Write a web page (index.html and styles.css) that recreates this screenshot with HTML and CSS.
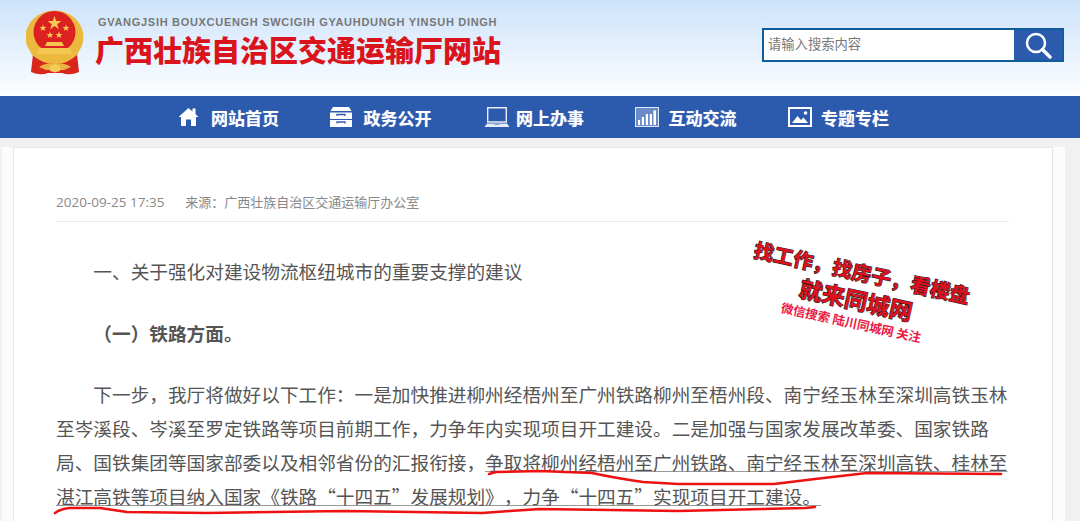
FILE: index.html
```html
<!DOCTYPE html>
<html lang="zh-CN">
<head>
    <meta charset="UTF-8">
    <meta name="viewport" content="width=device-width, initial-scale=1.0">
    <title>广西壮族自治区交通运输厅网站</title>
    <link rel="stylesheet" href="styles.css">
</head>
<body>
    <div class="header">
        <div class="logo">
            <svg class="emblem" viewBox="0 0 58 66">
                <!-- ribbon -->
                <path d="M7 44 L51 44 L53 62 Q44 66 36 63 L22 63 Q14 66 5 62 Z" fill="#d8261f"/>
                <path d="M13 57 Q20 52 29 54 Q38 52 45 57 L38 60 L20 60 Z" fill="#eab440"/>
                <!-- wreath and shield -->
                <ellipse cx="28.500" cy="27" rx="29" ry="26.500" fill="#ecb93f"/>
                <circle cx="28.500" cy="22" r="21" fill="#dc2220"/>
                <path d="M5 36 Q14 50 29 50 Q44 50 52 36 L52 44 Q42 54 29 54 Q16 54 5 44 Z" fill="#ecb93f"/>
                <!-- stars -->
                <path d="M28.500 6 L30.200 11 L35.300 11 L31.200 14.200 L32.800 19.200 L28.500 16 L24.200 19.200 L25.800 14.200 L21.700 11 L26.800 11 Z" fill="#f5cb55"/>
                <path d="M17 14.500 L17.900 17 L20.500 17 L18.400 18.600 L19.200 21.100 L17 19.600 L14.800 21.100 L15.600 18.600 L13.500 17 L16.100 17 Z" fill="#f5cb55"/>
                <path d="M40 14.500 L40.900 17 L43.500 17 L41.400 18.600 L42.200 21.100 L40 19.600 L37.800 21.100 L38.600 18.600 L36.500 17 L39.100 17 Z" fill="#f5cb55"/>
                <path d="M24 21.500 L24.900 24 L27.500 24 L25.400 25.600 L26.200 28.100 L24 26.600 L21.800 28.100 L22.600 25.600 L20.500 24 L23.100 24 Z" fill="#f5cb55"/>
                <path d="M33 21.500 L33.900 24 L36.500 24 L34.400 25.600 L35.200 28.100 L33 26.600 L30.800 28.100 L31.600 25.600 L29.500 24 L32.100 24 Z" fill="#f5cb55"/>
                <!-- gate -->
                <path d="M21 32 L36 32 L38 36 L19 36 Z" fill="#f2c850"/>
                <path d="M13 38 H44 L46 44 H11 Z" fill="#f2c850"/>
                <path d="M24 56 L29 54 L34 56 L34 61 L29 62.500 L24 61 Z" fill="#f5cb55"/>
            </svg>
            <div class="logo-text">
                <div class="logo-en">GVANGJSIH BOUXCUENGH SWCIGIH GYAUHDUNGH YINSUH DINGH</div>
                <div class="logo-cn">广西壮族自治区交通运输厅网站</div>
            </div>
        </div>
        <div class="search">
            <input class="search-input" type="text" placeholder="请输入搜索内容">
            <div class="search-btn">
                <svg viewBox="0 0 28 28" width="28" height="28">
                    <circle cx="12" cy="12" r="9" fill="none" stroke="#fff" stroke-width="2.500"/>
                    <path d="M18.500 18.500 L26 26" stroke="#fff" stroke-width="3.500" stroke-linecap="round"/>
                </svg>
            </div>
        </div>
    </div>

    <div class="navbar">
        <div class="nav-item">
            <span class="nav-icon">
                <svg viewBox="0 0 20 20" width="20" height="20">
                    <path d="M9.500 1 L13.500 4.500 L13.500 1.500 L16.500 1.500 L16.500 7 L19.500 10 L17 10 L17 19 L12 19 L12 12.500 L7 12.500 L7 19 L2 19 L2 10 L-.5 10 Z" fill="#fff"/>
                </svg>
            </span>
            网站首页
        </div>
        <div class="nav-item">
            <span class="nav-icon nav-icon-left">
                <svg viewBox="0 0 22 20" width="22" height="20">
                    <path d="M3 0 H19 L21.500 4 H.5 Z M0 5.500 H22 V12 H0 Z M0 13 H22 V20 H0 Z" fill="#fff"/>
                    <path d="M7 9 V7.500 H15 V9 M7 16.500 V15 H15 V16.500" fill="none" stroke="#2c5aad" stroke-width="1.300"/>
                </svg>
            </span>
            政务公开
        </div>
        <div class="nav-item">
            <span class="nav-icon">
                <svg viewBox="0 0 26 20" width="26" height="20">
                    <path d="M3.700 .8 H22.300 V15 H3.700 Z" fill="none" stroke="#e6edf8" stroke-width="1.400"/>
                    <path d="M3 16.500 H23 L25.500 20 H.5 Z" fill="#e6edf8"/>
                    <path d="M10.500 16.500 H15.500 V18 H10.500 Z" fill="#8aa6d6"/>
                </svg>
            </span>
            网上办事
        </div>
        <div class="nav-item">
            <span class="nav-icon nav-icon-left">
                <svg viewBox="0 0 24 20" width="24" height="20">
                    <rect x=".5" y=".5" width="23" height="19" fill="#6a8bc8" stroke="#dfe8f6"/>
                    <path d="M3 13 H5 V18 H3 Z M6.800 10 H9 V18 H6.800 Z M10.800 7 H13 V18 H10.800 Z M14.800 7 H17 V18 H14.800 Z M18.500 3.500 H21 V18 H18.500 Z" fill="#fff"/>
                </svg>
            </span>
            互动交流
        </div>
        <div class="nav-item">
            <span class="nav-icon nav-icon-left">
                <svg viewBox="0 0 24 20" width="24" height="20">
                    <rect x="1" y="1" width="22" height="18" fill="none" stroke="#fff" stroke-width="2"/>
                    <path d="M4 16 L9.500 9 L13 13 L15.500 10.500 L20 16 Z" fill="#fff"/>
                    <circle cx="17.500" cy="6" r="1.800" fill="#fff"/>
                </svg>
            </span>
            专题专栏
        </div>
    </div>

    <div class="page">
        <div class="side">
            <div class="article">
                <div class="meta">
                    <span class="meta-date">2020-09-25 17:35</span>
                    <span>来源：广西壮族自治区交通运输厅办公室</span>
                </div>
                <p class="para">一、关于强化对建设物流枢纽城市的重要支撑的建议</p>
                <p class="para para-bold">（一）铁路方面。</p>
                <p class="para para-last">下一步，我厅将做好以下工作：一是加快推进柳州经梧州至广州铁路柳州至梧州段、南宁经玉林至深圳高铁玉林至岑溪段、岑溪至罗定铁路等项目前期工作，力争年内实现项目开工建设。二是加强与国家发展改革委、国家铁路局、国铁集团等国家部委以及相邻省份的汇报衔接，<span class="under">争取将柳州经梧州至广州铁路、南宁经玉林至深圳高铁、桂林至湛江高铁等项目纳入国家《铁路“十四五”发展规划》，力争“十四五”实现项目开工建设。</span></p>
            </div>
        </div>
    </div>

    <div class="stamp">
        <div class="stamp-line1">找工作，找房子，看楼盘</div>
        <div class="stamp-line2">就来同城网</div>
        <div class="stamp-line3">微信搜索 陆川同城网 关注</div>
    </div>

    <svg class="scribble" viewBox="0 0 1080 521" width="1080" height="521">
        <path d="M489 474 L496 472 L540 471 L592 473 Q615 478 643 482 L678 484 L774 484 L815 479 L867 473 L1001 474" />
        <path d="M55 513 Q60 509 69 508 L100 508 L127 512 L207 513 L345 511 L482 513 L510 511 L540 509 L678 511 L805 508 L815 507" />
    </svg>
</body>
</html>
```

FILE: styles.css
```css
html, body {
    height: 521px;
    overflow: hidden;
}

body {
    margin: 0;
    background-color: #f1f1f1;
    font-family: "Noto Sans CJK SC", sans-serif;
    position: relative;
}

.header {
    height: 96px;
    display: flex;
    justify-content: space-between;
    align-items: flex-start;
    background-image: linear-gradient(to bottom, #cde3fb 0%, #fdfeff 100%);
}

.logo {
    display: flex;
    padding: 10px 0 0 26px;
}

.emblem {
    width: 58px;
    height: 66px;
}

.logo-text {
    margin-left: 11px;
}

.logo-en {
    margin: 4px 0 -1px 3px;
    font-family: "Liberation Sans", sans-serif;
    font-size: 11px;
    font-weight: bold;
    line-height: 16px;
    letter-spacing: 0.700px;
    color: #777;
    white-space: nowrap;
}

.logo-cn {
    font-size: 29px;
    font-weight: 900;
    line-height: 40px;
    color: #d9141c;
    white-space: nowrap;
}

.search {
    display: flex;
    width: 298px;
    height: 30px;
    margin: 28px 16px 0 0;
    border: 2px solid #0f5c9e;
    background-color: #fff;
}

.search-input {
    flex: 1;
    min-width: 0;
    padding: 0 4px 3px;
    border: none;
    outline: none;
    font-family: "Noto Sans CJK SC", sans-serif;
    font-size: 13.300px;
}

.search-input::placeholder {
    color: #777;
}

.search-btn {
    width: 48px;
    display: flex;
    justify-content: center;
    align-items: center;
    background-color: #2c5aad;
}

.navbar {
    height: 42px;
    padding-left: 179px;
    display: flex;
    align-items: center;
    background-color: #2c5aad;
}

.nav-item {
    width: 152.500px;
    display: flex;
    align-items: center;
    font-size: 17px;
    font-weight: bold;
    color: #fff;
    text-shadow: 0 0 1px rgba(255, 255, 255, 0.5);
}

.nav-icon {
    width: 32px;
    display: flex;
}

.nav-icon-left {
    margin-left: -1.500px;
    margin-right: 1.500px;
}

.page {
    padding: 9px 15px 0 2px;
}

.side {
    padding: 0 12px 0 11px;
    background-color: #fcfcfc;
}

.article {
    box-sizing: border-box;
    height: 374px;
    padding: 43px 43px 0 42px;
    border: 1px solid #e6e6e6;
    border-bottom: none;
    background-color: #fff;
}

.meta {
    padding-bottom: 8px;
    border-bottom: 1px solid #e8e8e8;
    font-size: 13px;
    line-height: 22px;
    color: #888;
}

.meta-date {
    margin-right: 18px;
    font-family: "Open Sans", sans-serif;
    font-size: 13.500px;
}

.para {
    margin: 0 0 27.500px;
    font-size: 18.670px;
    line-height: 34px;
    text-indent: 2em;
    text-spacing-trim: space-all;
    color: #555;
}

.meta + .para {
    margin-top: 32px;
}

.para-bold {
    font-weight: bold;
}

.para-last {
    margin-bottom: 0;
}

.under {
    text-decoration: underline;
    text-decoration-color: #999;
}

.stamp {
    position: absolute;
    left: 737px;
    top: 259px;
    width: 240px;
    display: flex;
    flex-direction: column;
    align-items: center;
    font-weight: bold;
    color: #e0101f;
    transform: rotate(12.300deg);
}

.stamp-line1,
.stamp-line2 {
    -webkit-text-stroke: 1.200px #1c1c1c;
    paint-order: stroke fill;
    white-space: nowrap;
}

.stamp-line1 {
    font-size: 20px;
    line-height: 26px;
}

.stamp-line2 {
    font-size: 23px;
    line-height: 28px;
}

.stamp-line3 {
    font-size: 12.500px;
    line-height: 19px;
    font-weight: bold;
    color: #ea1a45;
    white-space: nowrap;
}

.scribble {
    position: absolute;
    left: 0;
    top: 0;
    pointer-events: none;
}

.scribble path {
    fill: none;
    stroke: #ee1111;
    stroke-width: 2.600;
    stroke-linecap: round;
    stroke-linejoin: round;
}
```
